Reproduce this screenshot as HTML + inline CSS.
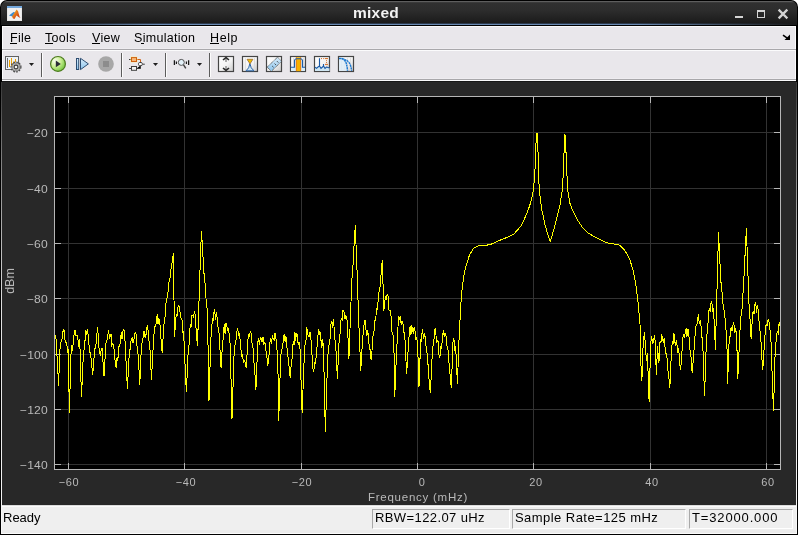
<!DOCTYPE html>
<html><head><meta charset="utf-8">
<style>
html,body{margin:0;padding:0;}
body{width:798px;height:535px;position:relative;overflow:hidden;background:#ffffff;font-family:"Liberation Sans",sans-serif;}
.abs{position:absolute;}
.menu,.xl,.yl,.sp,.abs,#ttext{will-change:transform;}
.r{position:absolute;}
#title{position:absolute;left:0;top:0;width:798px;height:26px;background:#000;border-radius:7px 7px 0 0;}
#titlein{position:absolute;left:1px;top:1px;width:796px;height:23px;border-radius:6px 6px 0 0;background:linear-gradient(#5e5e5e 0px,#5e5e5e 1px,#3a3a3a 1px,#3a3a3a 2px,#303030 2px,#2c2c2c 10px,#1c1c1c 21px,#1a1a1a 23px);}
#titleblue{position:absolute;left:1px;top:24px;width:796px;height:1px;background:linear-gradient(90deg,#1a1a1a,#6a8ab2 20%,#6a8ab2 80%,#1a1a1a);}
#ttext{position:absolute;left:0;top:4px;width:752px;text-align:center;color:#f2f2f2;font-weight:bold;font-size:15.5px;letter-spacing:0.2px;line-height:17px;}
.menu{position:absolute;top:31px;font-size:12.5px;letter-spacing:0.3px;line-height:15px;color:#000;}
.ul{position:absolute;top:43px;height:1px;background:#000;}
.xl{position:absolute;top:475px;width:60px;text-align:center;color:#b9b9b9;font-size:11px;letter-spacing:0.6px;line-height:14px;}
.yl{position:absolute;left:-0.1px;width:48px;text-align:right;color:#b9b9b9;font-size:11px;letter-spacing:0.2px;line-height:16px;transform:scaleX(1.1);transform-origin:right center;}
.sp{position:absolute;top:509px;height:20px;border-top:1px solid #a9a9a9;border-left:1px solid #a9a9a9;border-right:1px solid #fff;border-bottom:1px solid #fff;box-sizing:border-box;font-size:13px;line-height:16px;color:#000;padding-left:3px;white-space:nowrap;}
</style></head><body>
<div id="title"><div id="titlein"></div><div id="titleblue"></div><div style="position:absolute;left:1px;top:23px;width:796px;height:1px;background:linear-gradient(90deg,#1a1a1a,#2c3a4c 20%,#2c3a4c 80%,#1a1a1a)"></div></div>
<div id="ttext">mixed</div>
<svg class="abs" style="left:0;top:0" width="798" height="26">
  <defs><linearGradient id="mlg" x1="0" y1="0" x2="1" y2="1"><stop offset="0" stop-color="#f6d020"/><stop offset="0.5" stop-color="#e06818"/><stop offset="1" stop-color="#b82810"/></linearGradient></defs>
  <rect x="735" y="16" width="8" height="2" fill="#d4d4d4"/>
  <rect x="757.5" y="10.5" width="7" height="7" fill="none" stroke="#d4d4d4" stroke-width="1"/>
  <rect x="757" y="10" width="8" height="2" fill="#d4d4d4"/>
  <path d="M779.5,10.5 L786.5,17.5 M786.5,10.5 L779.5,17.5" stroke="#d4d4d4" stroke-width="2.4" stroke-linecap="square"/>
  <rect x="7" y="6" width="15" height="15" fill="#e6e6e6"/>
  <rect x="8" y="8" width="13" height="12" fill="#f0f0f0"/>
  <rect x="7" y="6" width="15" height="2" fill="#74a8dc"/>
  <path d="M9,15.5 L13.5,12 L15.5,12.5 L12.5,16.5 Z" fill="#3a8ad0"/>
  <path d="M12,16.5 L15,12 L16.5,9.5 L18,11 L19.5,16.5 L20.5,18 L18.5,17 L16.5,15.5 L14.5,19 L13,18.5 Z" fill="url(#mlg)"/>
</svg>
<!-- frame -->
<div class="r" style="left:0;top:25px;width:2px;height:57px;background:#000"></div>
<div class="r" style="left:796px;top:25px;width:2px;height:57px;background:#000"></div>
<div class="r" style="left:0;top:82px;width:1px;height:453px;background:#000"></div>
<div class="r" style="left:797px;top:82px;width:1px;height:453px;background:#000"></div>
<div class="r" style="left:1px;top:82px;width:1px;height:423px;background:linear-gradient(#383838 0px,#808080 76px,#e0e0e0 226px,#f4f4f4 423px)"></div>
<div class="r" style="left:796px;top:82px;width:1px;height:423px;background:linear-gradient(#383838 0px,#808080 76px,#e0e0e0 226px,#f4f4f4 423px)"></div>
<div class="r" style="left:1px;top:505px;width:1px;height:29px;background:#f8f8f8"></div>
<div class="r" style="left:796px;top:505px;width:1px;height:29px;background:#f8f8f8"></div>
<div class="r" style="left:0;top:534px;width:798px;height:1px;background:#000"></div>
<!-- menubar + toolbar -->
<div class="r" style="left:2px;top:26px;width:794px;height:55px;background:#fbfbfc"></div>
<div class="r" style="left:3px;top:27px;width:792px;height:22px;background:#e9e7eb"></div>
<div class="r" style="left:3px;top:48px;width:792px;height:1px;background:#eeecf0"></div>
<div class="r" style="left:2px;top:49px;width:794px;height:1px;background:#a9a8ab"></div>
<div class="r" style="left:3px;top:51px;width:792px;height:28px;background:#e9e7eb"></div>
<div class="r" style="left:3px;top:78px;width:792px;height:1px;background:#eeecf0"></div>
<div class="r" style="left:2px;top:79px;width:794px;height:1px;background:#a8a7aa"></div>
<div class="r" style="left:2px;top:81px;width:794px;height:1px;background:#181818"></div>
<!-- panel -->
<div class="r" style="left:2px;top:82px;width:794px;height:423px;background:#282828"></div>
<!-- status -->
<div class="r" style="left:2px;top:505px;width:794px;height:29px;background:#efefef"></div>
<div class="r" style="left:2px;top:505px;width:794px;height:1px;background:#dcdcdc"></div>
<div class="r" style="left:2px;top:506px;width:794px;height:1px;background:#fbfbfb"></div>
<div class="r" style="left:2px;top:530px;width:794px;height:3px;background:#ebebeb"></div>
<div class="r" style="left:2px;top:533px;width:794px;height:1px;background:#fbfbfb"></div>
<div class="menu" style="left:9.5px">File</div>
<div class="menu" style="left:45px">Tools</div>
<div class="menu" style="left:92px">View</div>
<div class="menu" style="left:133.5px">Simulation</div>
<div class="menu" style="left:209.5px;letter-spacing:0.6px">Help</div>
<div class="ul" style="left:10px;width:7px"></div><div class="ul" style="left:45px;width:8px"></div><div class="ul" style="left:92px;width:8px"></div><div class="ul" style="left:141px;width:3px"></div><div class="ul" style="left:210px;width:9px"></div>
<svg class="abs" style="left:0;top:0" width="798" height="535">
  
<defs>
 <radialGradient id="playg" cx="0.3" cy="0.3" r="0.8">
  <stop offset="0" stop-color="#fbfff2"/><stop offset="0.5" stop-color="#c8ee90"/><stop offset="1" stop-color="#6cc23a"/>
 </radialGradient>
 <linearGradient id="bxg" x1="0" y1="0" x2="1" y2="1">
  <stop offset="0" stop-color="#ffffff"/><stop offset="0.55" stop-color="#f4f4f4"/><stop offset="1" stop-color="#c8c8c8"/>
 </linearGradient>
 <linearGradient id="blueg" x1="0" y1="0" x2="0" y2="1">
  <stop offset="0" stop-color="#d8ecfa"/><stop offset="1" stop-color="#8cc4ec"/>
 </linearGradient>
</defs>
<rect x="5.5" y="56.5" width="13" height="13" fill="#eef3f8" stroke="#626262" stroke-width="1"/><path d="M7.5,58 V68" stroke="#707070" stroke-width="1"/><path d="M9.5,60 V67 M11.5,58 V66 M13.5,61.5 V64 M15.5,59 V62" stroke="#f2a200" stroke-width="1"/><circle cx="16" cy="67" r="4.9" fill="none" stroke="#4a4a4a" stroke-width="1.3" stroke-dasharray="1.7 1.15"/><circle cx="16" cy="67" r="4.1" fill="#b4b4b4" stroke="#5a5a5a" stroke-width="0.7"/><circle cx="16" cy="67" r="1.9" fill="#f4f4f4" stroke="#3c3c3c" stroke-width="1.1"/><path d="M29,63 L34,63 L31.5,66 Z" fill="#1e1e1e"/><rect x="41" y="53" width="1" height="24" fill="#5c5c5c"/><rect x="42" y="53" width="1" height="24" fill="#fcfcfc"/><circle cx="58" cy="63.9" r="7.4" fill="url(#playg)" stroke="#4c7a1e" stroke-width="1.2"/><path d="M55.8,60.4 L60.8,63.9 L55.8,67.3 Z" fill="#2a2c36"/><rect x="76.5" y="58.5" width="2.2" height="11" fill="url(#blueg)" stroke="#2c4c70" stroke-width="1"/><path d="M80.5,58.3 L88.4,63.9 L80.5,69.6 Z" fill="url(#blueg)" stroke="#2c4c70" stroke-width="1"/><circle cx="106" cy="64" r="7.8" fill="#a7a7a7"/><rect x="103" y="61" width="6" height="6" fill="#8c8c8c"/><rect x="121" y="53" width="1" height="24" fill="#5c5c5c"/><rect x="122" y="53" width="1" height="24" fill="#fcfcfc"/><path d="M129,59.5 H131.5 M140.5,65.5 V68.5 H136.5 M129,68.5 H131.5 M142.3,64.2 H144.8" stroke="#3a3a3a" stroke-width="1"/><path d="M136.5,59.5 H140.5 V62.5" stroke="#d06418" stroke-width="1" fill="none"/><rect x="130.3" y="56.6" width="7.3" height="5.9" rx="1" fill="#fff2a0" opacity="0.7"/><rect x="131.5" y="57.6" width="5" height="3.9" fill="#f6b878" stroke="#cf5f10" stroke-width="1"/><rect x="138.5" y="62.5" width="3.8" height="3.2" rx="1.2" fill="#fafafa" stroke="#404040" stroke-width="1"/><rect x="131.5" y="66.5" width="5" height="3.8" fill="#f2f2f2" stroke="#404040" stroke-width="1"/><path d="M153,63 L158,63 L155.5,66 Z" fill="#1e1e1e"/><rect x="165" y="53" width="1" height="24" fill="#5c5c5c"/><rect x="166" y="53" width="1" height="24" fill="#fcfcfc"/><path d="M174.4,60.2 V65 M188.6,60.2 V65" stroke="#1a1a1a" stroke-width="1.3"/><path d="M176.4,61.6 V64 M186.4,61.6 V64" stroke="#1a1a1a" stroke-width="1.2"/><path d="M183.4,64.6 L185.8,68.4" stroke="#404040" stroke-width="1.4"/><circle cx="181.3" cy="62.4" r="3" fill="#e4f2fa" stroke="#505050" stroke-width="1"/><path d="M197,63 L202,63 L199.5,66 Z" fill="#1e1e1e"/><rect x="209" y="53" width="1" height="24" fill="#5c5c5c"/><rect x="210" y="53" width="1" height="24" fill="#fcfcfc"/><rect x="218.5" y="56.5" width="15" height="15" fill="url(#bxg)" stroke="#454545" stroke-width="1.2"/><path d="M226,59 V62" stroke="#8a8a8a" stroke-width="1.4"/><path d="M223,60 L226,57.6 L229,60" fill="none" stroke="#2a2a2a" stroke-width="1.6"/><path d="M226,66 V69" stroke="#8a8a8a" stroke-width="1.4"/><path d="M223,68 L226,70.4 L229,68" fill="none" stroke="#2a2a2a" stroke-width="1.6"/><rect x="242.5" y="56.5" width="15" height="15" fill="url(#bxg)" stroke="#454545" stroke-width="1.2"/><path d="M245.3,58 V71 M254.5,58 V71" stroke="#dcdcdc" stroke-width="1"/><path d="M246,70.8 Q249.3,68.5 249.9,63.5 Q250.5,68.5 254,70.8 Z" fill="#cfe8f6" stroke="#2a64a8" stroke-width="1"/><path d="M247,59.3 L252.9,59.3 L250,63.8 Z" fill="#f2c000" stroke="#9a6a30" stroke-width="0.8"/><rect x="266.5" y="56.5" width="15" height="15" fill="url(#bxg)" stroke="#454545" stroke-width="1.2"/><path d="M267.2,67.1 L277.5,57.2 L281.6,61.3 L271.3,71.3 Z" fill="url(#blueg)" stroke="#333" stroke-width="0.9" stroke-dasharray="1 0.8"/><path d="M272.2,66 L273.5,67.3 M274.6,63.6 L275.9,64.9 M277,61.2 L278.3,62.5" stroke="#333" stroke-width="0.9"/><rect x="290.5" y="56.5" width="15" height="15" fill="url(#bxg)" stroke="#454545" stroke-width="1.2"/><path d="M293.5,58 V70 M303.5,58 V70" stroke="#dcdcdc" stroke-width="1"/><path d="M291,71 V67.2 H294.5 V60.3 Q295,58.8 296.5,58.8 H300.5 Q302,58.8 302.5,60.3 V67.2 H305 V71 Z" fill="#d6ecf6"/><rect x="296" y="57.2" width="5" height="14" fill="#f6b200"/><path d="M296.3,57.2 V71 M300.7,57.2 V71" stroke="#e07018" stroke-width="0.8"/><path d="M291,67.2 H294.5 V60.3 Q295,58.8 296.5,58.8 H300.5 Q302,58.8 302.5,60.3 V67.2 H305" fill="none" stroke="#1a5aa8" stroke-width="1.1"/><rect x="314.5" y="56.5" width="15" height="15" fill="url(#bxg)" stroke="#454545" stroke-width="1.2"/><path d="M315,71 V67.3 L316.5,68.3 L318,67 L319.5,66 L321,68.3 L322.5,67 L323.5,66 L325,68.3 L326.5,67 L328,67.5 L329.5,68 V71 Z" fill="#cfe6f2"/><path d="M315,67.3 L316.5,68.3 L318,67 L319.5,66 V58.3 M319.5,66 L321,68.3 L322.5,67 L323.5,66 V64 M323.5,66 L325,68.3 L326.5,67 L328,67.5 L329.5,68" fill="none" stroke="#1a5aa8" stroke-width="1.1"/><path d="M321,58.6 H322 M323.2,58.6 H324.2 M325,58.6 H328 M326.2,60.6 H327 M326.2,62.5 H327 M325,64.4 H328" stroke="#d86a20" stroke-width="1"/><rect x="338.5" y="56.5" width="15" height="15" fill="url(#bxg)" stroke="#454545" stroke-width="1.2"/><path d="M341.5,58 V71 M344.5,58 V71 M347.5,58 V71 M350.5,58 V71" stroke="#e0e0e0" stroke-width="1"/><path d="M339,71 V58.5 H341.5 Q345,60 346,62.5 Q347,67 347.5,71 Z" fill="#dcecf8" opacity="0.8"/><path d="M339,58.5 H341.5 Q345,60 346,62.5 Q347.2,66.5 347.5,70.8 M341.5,58.5 Q348,60 350,64 Q351.5,68 351.5,70.8" fill="none" stroke="#1a78d0" stroke-width="1.4" stroke-dasharray="2.2 0.5"/><path d="M784.5,40 L790,40 L790,34.5 Z" fill="#000"/><path d="M783,35.2 L788,38.6" stroke="#000" stroke-width="1.6"/>
  <rect x="54.5" y="96.5" width="726" height="373" fill="#000" stroke="#b6b6b6" stroke-width="1"/>
  <line x1="68.5" y1="97" x2="68.5" y2="469" stroke="#323232" stroke-width="1"/><line x1="184.5" y1="97" x2="184.5" y2="469" stroke="#323232" stroke-width="1"/><line x1="301.5" y1="97" x2="301.5" y2="469" stroke="#323232" stroke-width="1"/><line x1="417.5" y1="97" x2="417.5" y2="469" stroke="#323232" stroke-width="1"/><line x1="533.5" y1="97" x2="533.5" y2="469" stroke="#323232" stroke-width="1"/><line x1="650.5" y1="97" x2="650.5" y2="469" stroke="#323232" stroke-width="1"/><line x1="766.5" y1="97" x2="766.5" y2="469" stroke="#323232" stroke-width="1"/><line x1="55" y1="132.5" x2="780" y2="132.5" stroke="#323232" stroke-width="1"/><line x1="55" y1="188.5" x2="780" y2="188.5" stroke="#323232" stroke-width="1"/><line x1="55" y1="243.5" x2="780" y2="243.5" stroke="#323232" stroke-width="1"/><line x1="55" y1="298.5" x2="780" y2="298.5" stroke="#323232" stroke-width="1"/><line x1="55" y1="354.5" x2="780" y2="354.5" stroke="#323232" stroke-width="1"/><line x1="55" y1="409.5" x2="780" y2="409.5" stroke="#323232" stroke-width="1"/><line x1="55" y1="464.5" x2="780" y2="464.5" stroke="#323232" stroke-width="1"/>
  <line x1="68.5" y1="97" x2="68.5" y2="103" stroke="#b6b6b6"/><line x1="68.5" y1="463" x2="68.5" y2="469" stroke="#b6b6b6"/><line x1="184.5" y1="97" x2="184.5" y2="103" stroke="#b6b6b6"/><line x1="184.5" y1="463" x2="184.5" y2="469" stroke="#b6b6b6"/><line x1="301.5" y1="97" x2="301.5" y2="103" stroke="#b6b6b6"/><line x1="301.5" y1="463" x2="301.5" y2="469" stroke="#b6b6b6"/><line x1="417.5" y1="97" x2="417.5" y2="103" stroke="#b6b6b6"/><line x1="417.5" y1="463" x2="417.5" y2="469" stroke="#b6b6b6"/><line x1="533.5" y1="97" x2="533.5" y2="103" stroke="#b6b6b6"/><line x1="533.5" y1="463" x2="533.5" y2="469" stroke="#b6b6b6"/><line x1="650.5" y1="97" x2="650.5" y2="103" stroke="#b6b6b6"/><line x1="650.5" y1="463" x2="650.5" y2="469" stroke="#b6b6b6"/><line x1="766.5" y1="97" x2="766.5" y2="103" stroke="#b6b6b6"/><line x1="766.5" y1="463" x2="766.5" y2="469" stroke="#b6b6b6"/><line x1="55" y1="132.5" x2="61" y2="132.5" stroke="#b6b6b6"/><line x1="774" y1="132.5" x2="780" y2="132.5" stroke="#b6b6b6"/><line x1="55" y1="188.5" x2="61" y2="188.5" stroke="#b6b6b6"/><line x1="774" y1="188.5" x2="780" y2="188.5" stroke="#b6b6b6"/><line x1="55" y1="243.5" x2="61" y2="243.5" stroke="#b6b6b6"/><line x1="774" y1="243.5" x2="780" y2="243.5" stroke="#b6b6b6"/><line x1="55" y1="298.5" x2="61" y2="298.5" stroke="#b6b6b6"/><line x1="774" y1="298.5" x2="780" y2="298.5" stroke="#b6b6b6"/><line x1="55" y1="354.5" x2="61" y2="354.5" stroke="#b6b6b6"/><line x1="774" y1="354.5" x2="780" y2="354.5" stroke="#b6b6b6"/><line x1="55" y1="409.5" x2="61" y2="409.5" stroke="#b6b6b6"/><line x1="774" y1="409.5" x2="780" y2="409.5" stroke="#b6b6b6"/><line x1="55" y1="464.5" x2="61" y2="464.5" stroke="#b6b6b6"/><line x1="774" y1="464.5" x2="780" y2="464.5" stroke="#b6b6b6"/>
  <path d="M54.9,337.5 L55.5,335.4 L56.1,340.0 L56.7,351.2 L57.3,360.6 L57.9,371.7 L58.5,386.0 L59.1,370.4 L59.7,353.3 L60.3,344.8 L60.9,342.4 L61.8,341.3 L62.6,333.9 L63.3,329.9 L64.1,330.2 L64.9,339.6 L65.8,342.4 L66.4,342.2 L67.0,346.0 L67.6,352.0 L68.2,350.9 L68.8,381.1 L69.4,412.8 L70.2,382.6 L71.1,350.9 L71.8,344.9 L72.4,351.3 L73.1,343.6 L74.0,335.0 L75.0,330.2 L75.8,335.5 L76.7,335.1 L77.6,335.2 L78.4,343.6 L79.0,346.8 L79.6,338.7 L80.3,356.7 L80.9,378.8 L81.6,397.0 L82.4,374.3 L83.3,355.7 L84.2,348.7 L85.2,338.7 L85.9,330.4 L86.5,335.1 L87.2,329.0 L88.1,334.5 L88.9,343.6 L89.8,351.6 L90.8,355.7 L91.7,363.5 L92.5,375.2 L93.3,368.8 L94.2,355.7 L95.0,348.6 L95.7,346.0 L96.6,339.0 L97.4,326.6 L98.0,332.8 L98.6,343.6 L99.5,352.6 L100.5,355.7 L101.3,348.1 L102.2,348.4 L103.1,363.3 L104.0,376.4 L105.0,359.3 L105.9,343.6 L106.8,341.9 L107.8,335.1 L108.6,329.7 L109.5,339.3 L110.3,335.1 L111.1,334.8 L111.9,345.0 L112.7,343.6 L113.6,345.1 L114.4,353.3 L115.3,363.1 L116.3,368.0 L117.0,358.2 L117.8,360.4 L118.5,350.9 L119.2,344.3 L119.8,346.5 L120.5,338.7 L121.3,332.2 L122.1,339.4 L122.9,331.4 L123.8,328.8 L124.8,336.3 L125.6,354.8 L126.5,369.0 L127.3,388.5 L128.2,374.2 L129.0,358.2 L129.7,349.0 L130.5,349.0 L131.2,338.7 L132.1,338.0 L132.9,342.4 L133.7,342.4 L134.4,335.1 L135.2,332.3 L136.1,333.9 L136.9,345.6 L137.8,350.9 L138.8,366.1 L139.7,384.9 L140.4,372.6 L141.0,355.4 L141.7,343.6 L142.6,341.6 L143.4,333.9 L144.2,330.7 L145.1,337.5 L145.8,337.0 L146.5,329.0 L147.3,325.5 L148.2,331.4 L149.1,342.5 L149.9,348.4 L150.7,362.3 L151.4,380.0 L152.2,366.2 L153.1,348.4 L153.9,335.3 L154.8,326.6 L155.8,326.0 L156.7,316.9 L157.4,315.4 L158.0,323.8 L158.7,319.3 L159.6,320.1 L160.4,329.0 L161.4,344.6 L162.3,353.3 L163.1,337.3 L163.9,325.0 L164.9,318.3 L165.8,304.7 L166.8,298.4 L167.7,296.2 L168.6,284.5 L169.5,280.0 L170.4,276.4 L171.4,264.5 L172.4,261.8 L173.3,253.2 L174.0,300.0 L174.6,336.5 L175.4,324.4 L176.2,314.4 L177.1,315.0 L178.1,305.9 L178.9,305.9 L179.8,310.8 L180.7,317.7 L181.5,319.3 L182.2,320.3 L182.8,332.2 L183.5,331.4 L184.5,350.9 L185.4,373.2 L186.4,392.2 L187.4,368.9 L188.3,348.4 L189.1,344.2 L189.9,328.6 L190.7,324.2 L191.4,326.6 L192.0,315.7 L192.7,315.7 L193.6,316.9 L194.4,310.8 L195.0,313.8 L195.6,321.7 L196.6,337.0 L197.5,346.0 L198.2,323.5 L198.9,305.0 L199.6,283.4 L200.3,260.0 L200.9,244.7 L201.5,231.2 L202.2,243.5 L202.8,252.7 L203.5,265.0 L204.3,278.2 L205.2,284.9 L206.0,298.4 L206.7,306.2 L207.3,309.6 L208.2,354.5 L209.0,400.7 L209.9,370.9 L210.9,338.7 L211.8,326.4 L212.6,318.1 L213.4,321.4 L214.2,309.3 L215.0,314.4 L215.7,320.4 L216.3,311.7 L217.0,316.9 L217.8,326.6 L218.7,329.0 L219.5,340.1 L220.3,355.8 L221.1,367.9 L221.9,353.2 L222.7,345.9 L223.5,331.4 L224.3,324.0 L225.1,334.0 L225.9,323.2 L226.7,325.4 L227.6,330.4 L228.4,327.8 L229.2,334.1 L230.1,343.6 L231.1,382.8 L232.0,418.9 L232.7,397.1 L233.3,377.5 L234.0,355.7 L235.0,345.5 L235.9,341.4 L236.9,331.4 L237.7,328.6 L238.5,335.3 L239.3,333.9 L240.1,339.8 L241.0,350.3 L241.8,355.7 L242.6,354.9 L243.4,362.5 L244.2,360.6 L245.1,362.4 L246.1,367.9 L246.9,356.9 L247.8,341.2 L248.6,333.6 L249.5,337.1 L250.3,331.4 L251.1,332.8 L251.9,342.6 L252.7,343.6 L253.5,353.5 L254.3,367.8 L255.1,375.6 L255.9,389.8 L256.8,368.8 L257.6,343.6 L258.5,338.2 L259.4,345.4 L260.3,337.5 L261.2,338.7 L262.1,342.1 L263.0,336.9 L263.9,344.7 L264.8,342.4 L265.6,343.9 L266.3,356.0 L267.1,358.2 L267.8,365.5 L268.8,358.2 L269.7,343.6 L270.6,337.9 L271.5,343.8 L272.4,335.4 L273.3,338.7 L274.1,340.0 L275.0,332.6 L275.8,336.3 L276.8,349.2 L277.7,353.3 L278.2,385.4 L278.7,421.3 L279.6,391.4 L280.6,358.2 L281.5,349.6 L282.5,348.9 L283.4,337.8 L284.3,333.9 L285.1,342.1 L285.9,336.4 L286.7,343.6 L287.6,355.8 L288.5,358.3 L289.4,371.1 L290.3,377.6 L291.1,365.4 L291.8,363.0 L292.6,347.1 L293.3,341.2 L294.1,344.9 L294.9,332.0 L295.6,340.9 L296.4,333.9 L297.3,334.9 L298.2,345.1 L299.1,341.7 L300.0,348.6 L300.7,370.6 L301.4,390.7 L302.1,412.7 L303.0,390.2 L303.9,365.6 L304.5,352.8 L305.2,342.1 L305.9,341.9 L306.6,328.3 L307.3,329.0 L308.2,336.5 L309.2,336.8 L310.1,331.9 L311.0,339.5 L311.7,352.7 L312.4,357.6 L313.1,370.8 L313.8,371.5 L314.5,362.9 L315.2,363.0 L316.1,357.2 L317.0,347.3 L317.9,336.3 L318.8,329.0 L319.5,335.0 L320.2,331.9 L320.9,339.5 L321.8,347.8 L322.6,339.2 L323.5,347.3 L324.4,391.1 L325.4,432.3 L326.1,406.7 L326.8,386.2 L327.5,360.4 L328.4,349.8 L329.3,342.1 L330.2,338.7 L331.0,323.7 L331.9,321.1 L332.6,328.2 L333.3,319.4 L334.0,326.4 L334.7,337.3 L335.4,342.3 L336.1,352.5 L336.8,367.4 L337.4,378.7 L338.3,358.0 L339.2,339.5 L339.9,336.1 L340.6,321.4 L341.3,318.5 L342.2,319.5 L343.0,309.7 L343.9,310.7 L344.9,319.3 L345.8,315.9 L346.7,316.8 L347.6,326.4 L348.2,343.6 L348.9,359.1 L349.7,336.4 L350.5,316.2 L351.3,293.4 L352.0,278.6 L352.8,269.6 L353.5,255.0 L354.4,239.1 L355.3,225.1 L356.0,244.4 L356.6,260.0 L357.3,277.9 L358.0,300.0 L358.9,325.2 L359.8,346.1 L360.7,370.8 L361.4,361.2 L362.1,347.2 L362.8,336.8 L363.5,331.6 L364.1,323.8 L365.0,320.3 L365.9,329.0 L366.8,336.2 L367.6,330.1 L368.5,336.8 L369.4,348.9 L370.2,349.8 L371.1,360.4 L371.8,354.9 L372.5,339.9 L373.2,334.2 L374.0,330.8 L374.9,320.4 L375.7,319.7 L376.5,309.0 L377.4,309.3 L378.2,300.0 L379.0,291.7 L379.7,290.9 L380.5,282.0 L381.4,269.4 L382.4,259.8 L383.1,287.6 L383.8,311.4 L384.6,302.1 L385.5,298.0 L386.3,300.3 L387.1,294.6 L388.1,295.8 L389.0,310.0 L390.0,310.0 L391.0,316.1 L391.9,331.7 L392.9,333.3 L393.9,345.0 L394.7,397.0 L395.4,381.8 L396.1,362.5 L396.8,347.3 L397.5,337.6 L398.1,324.8 L398.8,315.9 L399.6,320.0 L400.4,316.5 L401.2,325.4 L402.0,321.1 L402.9,322.6 L403.7,332.6 L404.6,332.9 L405.3,344.7 L406.0,361.4 L406.7,373.5 L407.6,358.2 L408.4,347.2 L409.3,331.6 L410.1,326.0 L410.9,335.3 L411.6,326.2 L412.4,327.7 L413.3,333.6 L414.2,327.2 L415.1,331.6 L416.0,339.5 L416.8,337.6 L417.7,347.3 L418.4,368.3 L419.0,386.5 L419.9,361.5 L420.8,339.5 L421.5,342.4 L422.2,329.4 L422.9,332.9 L423.8,338.9 L424.6,332.7 L425.5,339.5 L426.4,350.9 L427.2,354.1 L428.1,365.6 L428.8,377.4 L429.5,381.9 L430.2,393.1 L431.1,379.2 L431.9,361.2 L432.8,347.3 L433.8,342.3 L434.7,329.0 L435.6,328.4 L436.4,342.1 L437.3,340.8 L438.2,341.5 L439.0,354.6 L439.9,357.8 L440.8,347.5 L441.6,348.4 L442.5,336.8 L443.4,329.7 L444.2,336.8 L445.1,332.9 L446.0,335.6 L446.8,345.8 L447.7,347.3 L448.6,356.1 L449.4,369.3 L450.3,376.4 L451.2,387.8 L452.1,366.6 L453.0,342.1 L453.9,337.8 L454.7,350.8 L455.6,346.0 L456.5,364.1 L457.4,383.9 L458.5,355.0 L459.2,334.3 L460.2,317.3 L461.4,295.5 L463.4,278.5 L465.8,266.3 L469.4,255.4 L473.1,248.8 L476.7,246.4 L480.4,245.2 L485.2,245.2 L488.9,244.9 L493.7,243.2 L498.6,240.8 L503.5,238.8 L509.5,236.4 L513.7,234.2 L518.0,229.4 L521.7,225.0 L527.3,212.5 L530.7,202.4 L533.0,192.3 L534.7,176.6 L535.6,156.4 L536.3,133.5 L537.4,134.0 L538.1,154.2 L539.2,190.0 L541.9,210.3 L545.3,226.0 L548.7,237.2 L550.2,241.7 L552.0,236.1 L555.4,223.7 L559.9,205.8 L562.6,187.8 L563.9,158.7 L564.4,134.4 L565.5,135.1 L566.2,158.7 L567.7,190.0 L570.0,203.5 L572.4,210.0 L577.3,219.7 L582.1,227.0 L588.2,233.1 L594.3,236.7 L601.6,240.4 L608.9,243.5 L613.7,244.0 L619.8,245.2 L624.7,250.1 L629.5,258.6 L633.2,270.7 L635.6,282.9 L638.0,302.3 L640.0,324.2 L640.6,355.6 L641.2,370.0 L641.9,381.0 L642.5,361.8 L643.1,345.9 L643.7,340.7 L644.3,332.5 L645.2,342.3 L646.2,358.0 L646.8,361.3 L647.4,353.1 L648.2,376.4 L649.1,401.7 L649.8,378.2 L650.4,350.7 L651.0,341.3 L651.6,336.1 L652.5,343.1 L653.5,342.2 L654.4,334.8 L655.2,341.0 L655.8,359.9 L656.4,375.0 L657.0,359.6 L657.6,345.9 L658.2,356.4 L658.9,362.9 L659.5,350.6 L660.1,341.0 L660.9,343.3 L661.7,335.7 L662.5,337.4 L663.3,343.4 L664.1,338.2 L664.9,345.9 L665.7,353.2 L666.6,353.7 L667.4,362.9 L668.2,373.8 L669.0,378.6 L669.8,388.3 L670.6,370.6 L671.5,350.7 L672.3,341.3 L673.1,342.7 L673.9,333.7 L674.6,335.0 L675.2,345.7 L675.9,343.4 L676.7,339.6 L677.5,353.0 L678.3,348.3 L679.1,353.9 L679.9,365.0 L680.7,370.1 L681.4,358.8 L682.0,351.3 L682.7,338.6 L683.5,333.8 L684.3,337.8 L685.1,333.7 L686.1,328.2 L687.0,336.6 L688.0,328.9 L688.8,333.3 L689.6,347.0 L690.4,353.1 L691.1,357.9 L691.7,370.1 L692.4,372.6 L693.4,356.7 L694.3,347.4 L695.3,331.3 L696.1,325.2 L696.9,325.1 L697.7,319.1 L698.5,314.2 L699.3,324.1 L700.1,320.4 L700.9,324.7 L701.8,337.3 L702.6,338.6 L703.5,365.5 L704.5,395.6 L705.4,372.6 L706.2,345.9 L707.0,333.8 L707.8,326.9 L708.6,313.1 L709.4,307.8 L710.2,311.9 L711.0,303.4 L711.8,301.5 L712.7,310.8 L713.5,309.4 L714.5,328.0 L715.4,349.5 L716.1,323.4 L716.9,293.4 L717.8,260.0 L718.5,231.8 L719.1,244.9 L719.8,260.0 L720.6,275.3 L721.4,289.0 L722.2,292.6 L723.1,304.8 L723.9,309.4 L724.9,316.6 L725.8,329.0 L726.8,336.1 L727.6,383.5 L728.5,359.1 L729.3,336.1 L730.2,336.1 L731.1,327.5 L732.0,331.1 L732.9,325.2 L733.8,322.4 L734.8,333.2 L735.7,328.4 L736.6,334.9 L737.2,357.6 L737.8,378.6 L738.6,360.1 L739.4,344.5 L740.2,326.4 L741.0,315.7 L741.9,310.2 L742.7,300.2 L743.4,285.1 L744.1,274.8 L744.8,260.0 L745.6,243.1 L746.5,228.0 L747.0,246.3 L747.5,262.0 L748.1,278.0 L748.7,298.0 L749.5,312.4 L750.3,323.1 L751.1,338.6 L751.7,330.3 L752.3,319.1 L753.1,310.8 L754.0,314.2 L754.8,304.6 L755.7,302.7 L756.6,312.5 L757.5,305.0 L758.4,311.9 L759.4,326.9 L760.3,332.6 L761.3,345.9 L762.0,360.2 L762.8,370.1 L763.6,355.2 L764.4,346.1 L765.2,331.3 L766.2,323.8 L767.1,326.3 L768.1,319.1 L768.9,321.3 L769.8,329.4 L770.6,331.3 L771.6,357.3 L772.5,386.4 L773.5,411.4 L774.5,376.4 L775.4,343.4 L776.2,341.7 L777.0,333.3 L777.8,331.3 L778.5,335.3 L779.1,322.3 L779.8,326.4" fill="none" stroke="#ffff00" stroke-width="1" stroke-linejoin="miter" shape-rendering="crispEdges"/>
</svg>
<div class="xl" style="left:39.0px">−60</div><div class="xl" style="left:155.5px">−40</div><div class="xl" style="left:271.5px">−20</div><div class="xl" style="left:392.0px">0</div><div class="xl" style="left:505.5px">20</div><div class="xl" style="left:622.0px">40</div><div class="xl" style="left:738.0px">60</div><div class="yl" style="top:124.5px">−20</div><div class="yl" style="top:180.5px">−40</div><div class="yl" style="top:235.5px">−60</div><div class="yl" style="top:290.5px">−80</div><div class="yl" style="top:346.5px">−100</div><div class="yl" style="top:401.5px">−120</div><div class="yl" style="top:456.5px">−140</div>
<div class="abs" style="left:-10.5px;top:274px;width:40px;text-align:center;transform:rotate(-90deg);color:#b9b9b9;font-size:12.5px;line-height:14px;">dBm</div>
<div class="abs" style="left:357.5px;top:490px;width:120px;white-space:nowrap;text-align:center;color:#b9b9b9;font-size:11.5px;letter-spacing:0.75px;line-height:14px;">Frequency (mHz)</div>
<div class="abs" style="left:3px;top:510px;font-size:13px;line-height:16px;color:#000;">Ready</div>
<div class="sp" style="left:372px;width:138px;letter-spacing:0.4px;padding-left:2px">RBW=122.07 uHz</div>
<div class="sp" style="left:512px;width:174px;letter-spacing:0.45px;padding-left:2px">Sample Rate=125 mHz</div>
<div class="sp" style="left:689px;width:104px;letter-spacing:0.85px;padding-left:2px">T=32000.000</div>
</body></html>
